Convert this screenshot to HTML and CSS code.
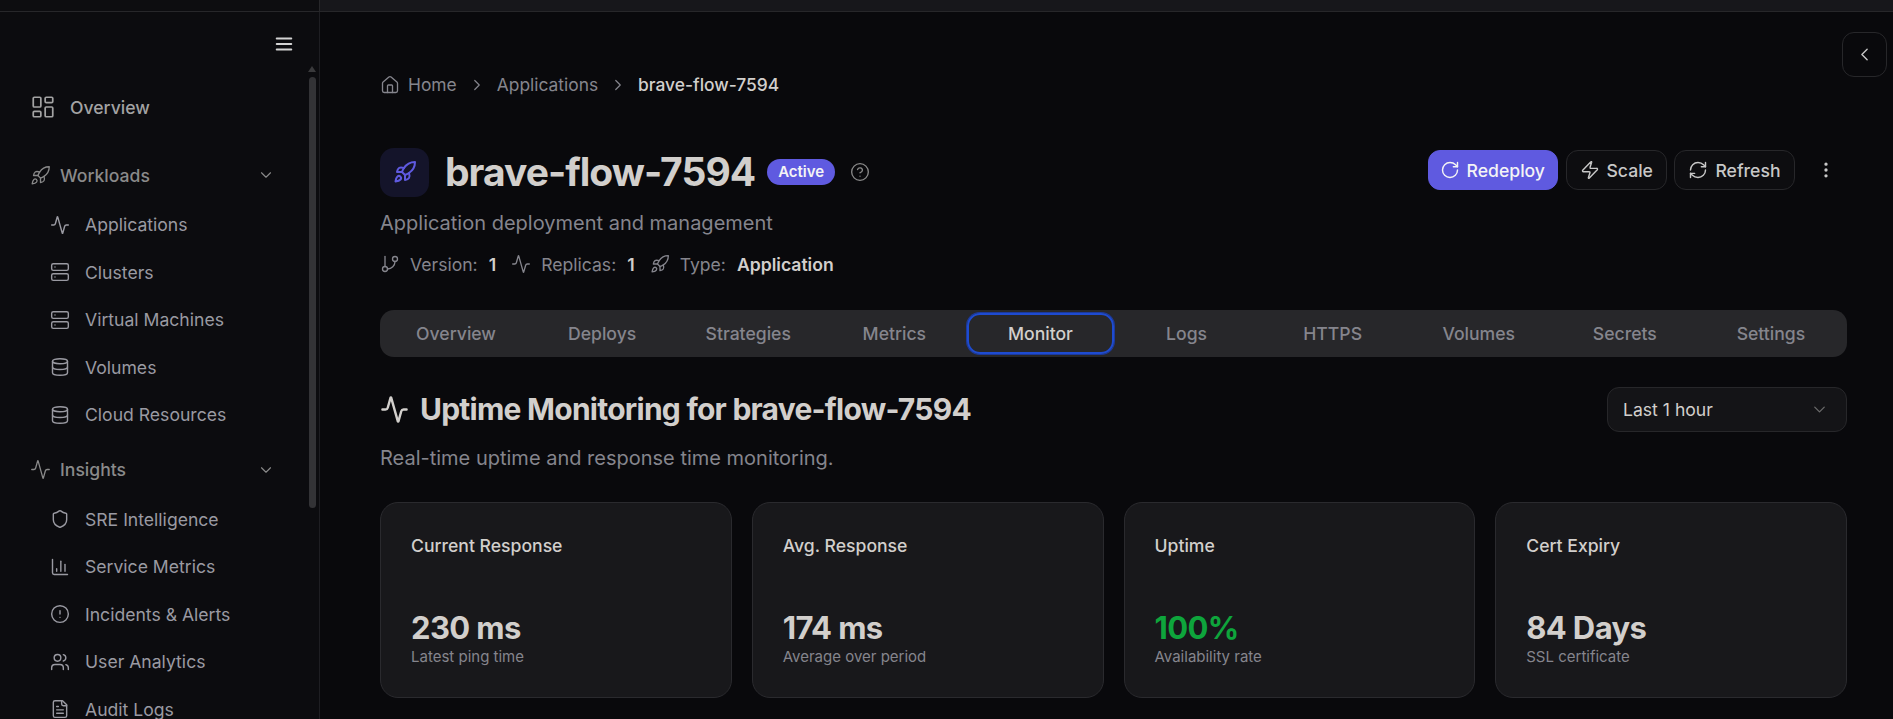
FILE: index.html
```html
<!DOCTYPE html>
<html lang="en">
<head>
<meta charset="utf-8">
<title>brave-flow-7594</title>
<link rel="stylesheet" href="styles.css">
</head>
<body>
<svg class="sprite" xmlns="http://www.w3.org/2000/svg">
  <defs>
    <symbol id="i-dash" viewBox="0 0 24 24"><rect width="7" height="9" x="3" y="3" rx="1"/><rect width="7" height="5" x="14" y="3" rx="1"/><rect width="7" height="9" x="14" y="12" rx="1"/><rect width="7" height="5" x="3" y="16" rx="1"/></symbol>
    <symbol id="i-rocket" viewBox="0 0 24 24"><path d="M4.5 16.5c-1.5 1.26-2 5-2 5s3.74-.5 5-2c.71-.84.7-2.13-.09-2.91a2.18 2.18 0 0 0-2.91-.09z"/><path d="m12 15-3-3a22 22 0 0 1 2-3.95A12.88 12.88 0 0 1 22 2c0 2.72-.78 7.5-6 11a22.35 22.35 0 0 1-4 2z"/><path d="M9 12H4s.55-3.03 2-4c1.62-1.08 5 0 5 0"/><path d="M12 15v5s3.03-.55 4-2c1.08-1.62 0-5 0-5"/></symbol>
    <symbol id="i-activity" viewBox="0 0 24 24"><path d="M22 12h-2.48a2 2 0 0 0-1.93 1.46l-2.35 8.36a.25.25 0 0 1-.48 0L9.24 2.18a.25.25 0 0 0-.48 0l-2.35 8.36A2 2 0 0 1 4.49 12H2"/></symbol>
    <symbol id="i-server" viewBox="0 0 24 24"><rect width="20" height="8" x="2" y="2" rx="2"/><rect width="20" height="8" x="2" y="14" rx="2"/><path d="M6 6h.01"/><path d="M6 18h.01"/></symbol>
    <symbol id="i-db" viewBox="0 0 24 24"><ellipse cx="12" cy="5" rx="9" ry="3"/><path d="M3 5V19A9 3 0 0 0 21 19V5"/><path d="M3 12A9 3 0 0 0 21 12"/></symbol>
    <symbol id="i-shield" viewBox="0 0 24 24"><path d="M20 13c0 5-3.5 7.5-7.66 8.95a1 1 0 0 1-.67-.01C7.5 20.5 4 18 4 13V6a1 1 0 0 1 1-1c2 0 4.5-1.2 6.24-2.72a1.17 1.17 0 0 1 1.52 0C14.51 3.81 17 5 19 5a1 1 0 0 1 1 1z"/></symbol>
    <symbol id="i-chart" viewBox="0 0 24 24"><path d="M3 3v16a2 2 0 0 0 2 2h16"/><path d="M18 17V9"/><path d="M13 17V5"/><path d="M8 17v-3"/></symbol>
    <symbol id="i-alert" viewBox="0 0 24 24"><circle cx="12" cy="12" r="10"/><path d="M12 8v4"/><path d="M12 16h.01"/></symbol>
    <symbol id="i-users" viewBox="0 0 24 24"><path d="M16 21v-2a4 4 0 0 0-4-4H6a4 4 0 0 0-4 4v2"/><path d="M16 3.128a4 4 0 0 1 0 7.744"/><path d="M22 21v-2a4 4 0 0 0-3-3.87"/><circle cx="9" cy="7" r="4"/></symbol>
    <symbol id="i-file" viewBox="0 0 24 24"><path d="M15 2H6a2 2 0 0 0-2 2v16a2 2 0 0 0 2 2h12a2 2 0 0 0 2-2V7Z"/><path d="M14 2v4a2 2 0 0 0 2 2h4"/><path d="M10 9H8"/><path d="M16 13H8"/><path d="M16 17H8"/></symbol>
    <symbol id="i-home" viewBox="0 0 24 24"><path d="M15 21v-8a1 1 0 0 0-1-1h-4a1 1 0 0 0-1 1v8"/><path d="M3 10a2 2 0 0 1 .709-1.528l7-5.999a2 2 0 0 1 2.582 0l7 5.999A2 2 0 0 1 21 10v9a2 2 0 0 1-2 2H5a2 2 0 0 1-2-2z"/></symbol>
    <symbol id="i-right" viewBox="0 0 24 24"><path d="m9 18 6-6-6-6"/></symbol>
    <symbol id="i-down" viewBox="0 0 24 24"><path d="m6 9 6 6 6-6"/></symbol>
    <symbol id="i-left" viewBox="0 0 24 24"><path d="m15 18-6-6 6-6"/></symbol>
    <symbol id="i-help" viewBox="0 0 24 24"><circle cx="12" cy="12" r="10"/><path d="M9.09 9a3 3 0 0 1 5.83 1c0 2-3 3-3 3"/><path d="M12 17h.01"/></symbol>
    <symbol id="i-branch" viewBox="0 0 24 24"><path d="M6 3v12"/><circle cx="18" cy="6" r="3"/><circle cx="6" cy="18" r="3"/><path d="M18 9a9 9 0 0 1-9 9"/></symbol>
    <symbol id="i-rotate" viewBox="0 0 24 24"><path d="M21 12a9 9 0 1 1-9-9c2.52 0 4.93 1 6.74 2.74L21 8"/><path d="M21 3v5h-5"/></symbol>
    <symbol id="i-zap" viewBox="0 0 24 24"><path d="M4 14a1 1 0 0 1-.78-1.63l9.9-10.2a.5.5 0 0 1 .86.46l-1.92 6.02A1 1 0 0 0 13 10h7a1 1 0 0 1 .78 1.63l-9.9 10.2a.5.5 0 0 1-.86-.46l1.92-6.02A1 1 0 0 0 11 14z"/></symbol>
    <symbol id="i-refresh" viewBox="0 0 24 24"><path d="M3 12a9 9 0 0 1 9-9 9.75 9.75 0 0 1 6.74 2.74L21 8"/><path d="M21 3v5h-5"/><path d="M21 12a9 9 0 0 1-9 9 9.75 9.75 0 0 1-6.74-2.74L3 16"/><path d="M8 16H3v5"/></symbol>
    <symbol id="i-dots" viewBox="0 0 24 24"><circle cx="12" cy="12" r="1"/><circle cx="12" cy="5" r="1"/><circle cx="12" cy="19" r="1"/></symbol>
    <symbol id="i-menu" viewBox="0 0 24 24"><path d="M4 12h16"/><path d="M4 6h16"/><path d="M4 18h16"/></symbol>
  </defs>
</svg>

<div class="topbar"><div class="topbar-left"></div><div class="topbar-right"></div></div>
<div class="shell">
  <aside class="sidebar">
    <div class="side-head"><svg class="ic ic-menu"><use href="#i-menu"/></svg></div>
    <nav class="nav">
      <a class="nav-top"><svg class="ic ic-top"><use href="#i-dash"/></svg>Overview</a>
      <div class="nav-group"><svg class="ic ic-group"><use href="#i-rocket"/></svg><span class="grow">Workloads</span><svg class="ic ic-chev"><use href="#i-down"/></svg></div>
      <a class="nav-item"><svg class="ic"><use href="#i-activity"/></svg>Applications</a>
      <a class="nav-item"><svg class="ic"><use href="#i-server"/></svg>Clusters</a>
      <a class="nav-item"><svg class="ic"><use href="#i-server"/></svg>Virtual Machines</a>
      <a class="nav-item"><svg class="ic"><use href="#i-db"/></svg>Volumes</a>
      <a class="nav-item"><svg class="ic"><use href="#i-db"/></svg>Cloud Resources</a>
      <div class="nav-group nav-group-next"><svg class="ic ic-group"><use href="#i-activity"/></svg><span class="grow">Insights</span><svg class="ic ic-chev"><use href="#i-down"/></svg></div>
      <a class="nav-item"><svg class="ic"><use href="#i-shield"/></svg>SRE Intelligence</a>
      <a class="nav-item"><svg class="ic"><use href="#i-chart"/></svg>Service Metrics</a>
      <a class="nav-item"><svg class="ic"><use href="#i-alert"/></svg>Incidents &amp; Alerts</a>
      <a class="nav-item"><svg class="ic"><use href="#i-users"/></svg>User Analytics</a>
      <a class="nav-item"><svg class="ic"><use href="#i-file"/></svg>Audit Logs</a>
    </nav>
    <div class="scroll-arrow"></div>
    <div class="scroll-thumb"></div>
  </aside>

  <main class="main">
    <button class="back"><svg class="ic ic-back"><use href="#i-left"/></svg></button>
    <div class="crumbs">
      <svg class="ic ic-home"><use href="#i-home"/></svg><span>Home</span>
      <svg class="ic ic-sep"><use href="#i-right"/></svg><span>Applications</span>
      <svg class="ic ic-sep"><use href="#i-right"/></svg><span class="crumb-now">brave-flow-7594</span>
    </div>

    <header class="head">
      <div class="app-icon"><svg class="ic ic-app"><use href="#i-rocket"/></svg></div>
      <h1 class="title">brave-flow-7594</h1>
      <span class="badge">Active</span>
      <svg class="ic ic-help"><use href="#i-help"/></svg>
      <div class="actions">
        <button class="btn btn-primary"><svg class="ic ic-btn"><use href="#i-rotate"/></svg>Redeploy</button>
        <button class="btn"><svg class="ic ic-btn"><use href="#i-zap"/></svg>Scale</button>
        <button class="btn"><svg class="ic ic-btn"><use href="#i-refresh"/></svg>Refresh</button>
        <svg class="ic ic-dots"><use href="#i-dots"/></svg>
      </div>
    </header>
    <p class="subtitle">Application deployment and management</p>
    <div class="meta">
      <svg class="ic ic-meta"><use href="#i-branch"/></svg><span class="m-label">Version:</span><b class="m-val">1</b>
      <svg class="ic ic-meta"><use href="#i-activity"/></svg><span class="m-label">Replicas:</span><b class="m-val">1</b>
      <svg class="ic ic-meta"><use href="#i-rocket"/></svg><span class="m-label">Type:</span><b class="m-val">Application</b>
    </div>

    <div class="tabs">
      <span class="tab">Overview</span>
      <span class="tab">Deploys</span>
      <span class="tab">Strategies</span>
      <span class="tab">Metrics</span>
      <span class="tab tab-on">Monitor</span>
      <span class="tab">Logs</span>
      <span class="tab">HTTPS</span>
      <span class="tab">Volumes</span>
      <span class="tab">Secrets</span>
      <span class="tab">Settings</span>
    </div>

    <section class="sec-head">
      <div>
        <h2 class="sec-title"><svg class="ic ic-sec"><use href="#i-activity"/></svg>Uptime Monitoring for brave-flow-7594</h2>
        <p class="sec-sub">Real-time uptime and response time monitoring.</p>
      </div>
      <div class="select"><span>Last 1 hour</span><svg class="ic ic-select"><use href="#i-down"/></svg></div>
    </section>

    <div class="cards">
      <div class="card"><div class="c-label">Current Response</div><div class="c-val">230 ms</div><div class="c-note">Latest ping time</div></div>
      <div class="card"><div class="c-label">Avg. Response</div><div class="c-val">174 ms</div><div class="c-note">Average over period</div></div>
      <div class="card"><div class="c-label">Uptime</div><div class="c-val c-good">100%</div><div class="c-note">Availability rate</div></div>
      <div class="card"><div class="c-label">Cert Expiry</div><div class="c-val">84 Days</div><div class="c-note">SSL certificate</div></div>
    </div>
  </main>
</div>
</body>
</html>
```

FILE: styles.css
```css
* { box-sizing: border-box; }
html, body { margin: 0; height: 719px; overflow: hidden; }
body {
  background: #09090c;
  color: #d2cfcc;
  font-family: Inter, "Liberation Sans", sans-serif;
  font-size: 17.6px;
}
.sprite { width: 0; height: 0; position: absolute; }
.ic {
  width: 20px; height: 20px; flex: none;
  fill: none; stroke: currentColor; stroke-width: 1.7;
  stroke-linecap: round; stroke-linejoin: round;
}

.topbar { display: flex; height: 12px; border-bottom: 1px solid #27272a; }
.topbar-left { width: 320px; background: #0d0d10; border-right: 1px solid #27272a; }
.topbar-right { flex: 1; background: #17171b; }
.shell { display: flex; height: 707px; }

.sidebar {
  position: relative; width: 320px; flex: none;
  background: #0c0c0f; border-right: 1px solid #1e1e22;
  overflow: hidden; color: #a3a3a3;
}
.side-head { display: flex; justify-content: flex-end; padding: 21px 24px 0 0; height: 66px; }
.ic-menu { width: 22px; height: 22px; color: #d4d4d4; stroke-width: 2; }
.nav { padding: 0 0 0 30px; }
.nav-top { display: flex; align-items: center; gap: 14px; height: 58px; margin-bottom: 13px; color: #a3a3a3; font-weight: 500; }
.ic-top { width: 26px; height: 26px; stroke-width: 1.6; }
.nav-group { display: flex; align-items: center; gap: 9px; height: 52px; padding-right: 44px; color: #8a8a8a; font-weight: 500; }
.nav-group-next { margin-top: 5px; }
.grow { flex: 1; }
.ic-group { width: 21px; height: 21px; stroke-width: 1.5; }
.ic-chev { width: 18px; height: 18px; stroke-width: 1.5; }
.nav-item { display: flex; align-items: center; gap: 15px; height: 47.5px; padding-left: 20px; color: #9a9aa2; }
.scroll-arrow {
  position: absolute; left: 308px; top: 54px; width: 0; height: 0;
  border: 4.5px solid transparent; border-bottom: 6px solid #3a3a3c; border-top: 0;
}
.scroll-thumb { position: absolute; left: 309px; top: 65px; width: 7px; height: 431px; border-radius: 4px; background: #333336; }

.main { position: relative; flex: 1; min-width: 0; padding: 60px 46px 0 60px; }
.back {
  position: absolute; right: 6px; top: 20px; width: 45px; height: 45px;
  display: flex; align-items: center; justify-content: center;
  background: transparent; border: 1px solid #27272a; border-radius: 12px; color: #c8c8c8;
}
.ic-back { width: 21px; height: 21px; stroke-width: 1.6; }

.crumbs { display: flex; align-items: center; height: 26px; color: #85858d; font-size: 17.4px; line-height: 26px; }
.ic-home { width: 20px; height: 20px; margin-right: 8px; stroke-width: 1.6; }
.ic-sep { width: 18px; height: 18px; margin: 0 11px; stroke-width: 1.6; }
.crumb-now { color: #d2cfcc; font-weight: 500; }

.head { display: flex; align-items: center; margin-top: 49px; height: 50px; }
.app-icon {
  width: 49px; height: 49px; border-radius: 14px; background: #14142a;
  display: flex; align-items: center; justify-content: center; color: #5f5ae0;
}
.ic-app { width: 24px; height: 24px; stroke-width: 2; }
.title { margin: 0 0 0 16px; font-size: 39px; font-weight: 700; line-height: 50px; letter-spacing: -0.025em; color: #d2cfcc; }
.badge {
  margin-left: 12px; height: 26px; padding: 0 11px; border-radius: 13px;
  background: #5f5ae0; color: #f4f4f5; font-size: 15px; font-weight: 600; line-height: 26px;
}
.ic-help { margin-left: 15px; width: 20px; height: 20px; color: #8a8a8a; stroke-width: 1.6; }
.actions { display: flex; align-items: center; gap: 7.5px; margin-left: auto; margin-bottom: 4px; }
.btn {
  display: flex; align-items: center; gap: 7px; height: 40px; padding: 0 13px;
  background: #0d0d10; border: 1px solid #27272a; border-radius: 12px;
  color: #c8c8c8; font: 500 17.6px Inter, "Liberation Sans", sans-serif;
}
.btn-primary { padding: 0 12px 0 11px; background: #5f5ae0; border-color: #5f5ae0; color: #f4f4f5; }
.ic-btn { width: 20px; height: 20px; }
.ic-dots { margin: 0 11px 0 14px; width: 20px; height: 20px; color: #c8c8c8; stroke-width: 2; }

.subtitle { margin: 13px 0 0; height: 26px; line-height: 26px; color: #85858d; font-size: 20px; }
.meta { display: flex; align-items: center; margin-top: 15px; height: 26px; color: #85858d; }
.ic-meta { width: 20px; height: 20px; stroke-width: 1.6; }
.m-label { margin-left: 10px; }
.m-val { margin: 0 15px 0 11px; color: #d2cfcc; font-weight: 600; }

.tabs {
  display: grid; grid-template-columns: repeat(10, 1fr);
  margin-top: 33px; height: 47px; padding: 3px; background: #27272a; border-radius: 14px;
}
.tab { display: flex; align-items: center; justify-content: center; color: #85858d; font-weight: 500; }
.tab-on { color: #d2cfcc; border: 2px solid #1e4bd0; border-radius: 13px; box-shadow: 0 0 0 1px #1c3a9c; }

.sec-head { display: flex; align-items: flex-start; justify-content: space-between; margin-top: 30px; }
.sec-title { display: flex; align-items: center; gap: 11px; margin: 0; height: 44px; font-size: 30px; font-weight: 700; letter-spacing: -0.025em; color: #d2cfcc; }
.ic-sec { width: 29px; height: 29px; stroke-width: 2; }
.sec-sub { margin: 14px 0 0; height: 26px; line-height: 26px; color: #85858d; font-size: 20px; }
.select {
  display: flex; align-items: center; justify-content: space-between;
  width: 240px; height: 45px; padding: 0 17px 0 15px;
  background: #141417; border: 1px solid #27272a; border-radius: 12px; color: #d2cfcc;
}
.ic-select { width: 19px; height: 19px; color: #6b6b6b; stroke-width: 1.6; }

.cards { display: grid; grid-template-columns: repeat(4, 1fr); gap: 20px; margin-top: 31px; }
.card { height: 196px; padding: 30px; background: #18181b; border: 1px solid #2a2a2e; border-radius: 18px; }
.c-label { height: 26px; line-height: 26px; font-weight: 500; color: #d2cfcc; }
.c-val { margin-top: 49px; height: 40px; line-height: 40px; font-size: 31px; font-weight: 700; letter-spacing: -0.02em; color: #d2cfcc; }
.c-good { color: #0ea53c; }
.c-note { margin-top: -1px; color: #85858d; font-size: 15px; line-height: 20px; }
```
